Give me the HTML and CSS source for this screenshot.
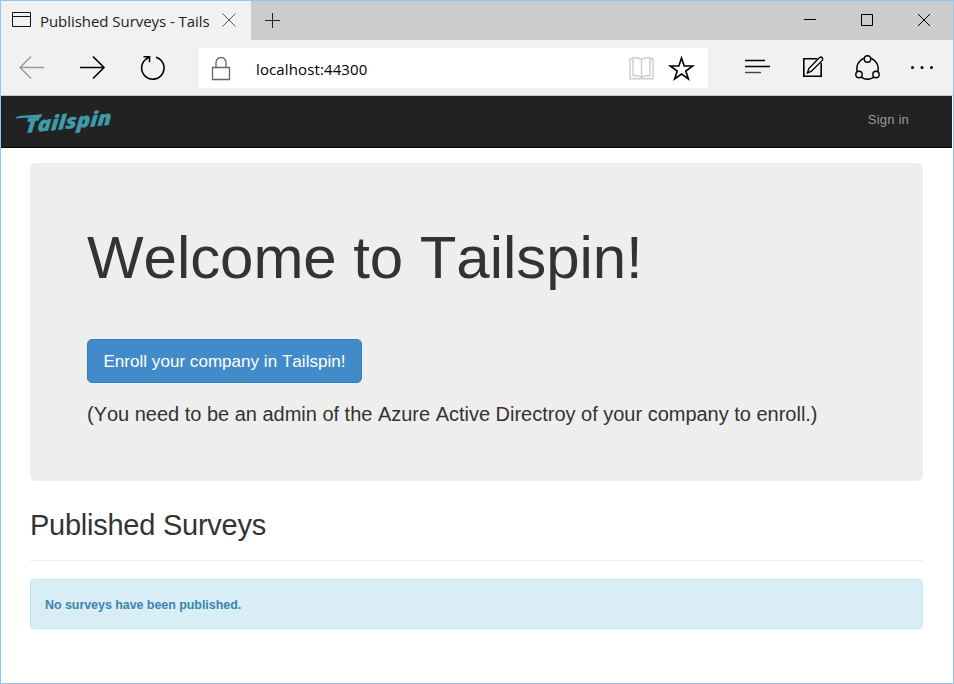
FILE: index.html
```html
<!DOCTYPE html>
<html lang="en">
<head>
<meta charset="utf-8">
<title>Published Surveys - Tailspin</title>
<link rel="stylesheet" href="styles.css">
</head>
<body>
<div class="window">
  <header class="titlebar">
    <div class="tab">
      <svg class="tab-icon" width="19" height="16" fill="none" stroke="#111"><path d="M.5.5h18v14H.5zM.5 4.500h18"/></svg>
      <span class="tab-title">Published Surveys - Tails</span>
      <svg class="tab-close" width="14" height="14" fill="none" stroke="#555"><path d="M.5.5l13 13M13.500.5l-13 13"/></svg>
    </div>
    <svg class="new-tab" width="16" height="16" fill="none" stroke="#222"><path d="M7.500 0v15M0 7.500h15"/></svg>
    <div class="controls">
      <svg width="12" height="12" stroke="#000"><path d="M0 5.500h12"/></svg>
      <svg width="12" height="12" fill="none" stroke="#000"><path d="M.5.5h11v11H.5z"/></svg>
      <svg width="12" height="12" fill="none" stroke="#000"><path d="M0 0l12 12M12 0L0 12"/></svg>
    </div>
  </header>
  <div class="toolbar">
    <svg class="nav-icons" width="197" height="55" fill="none" stroke="#000" stroke-width="1.6">
      <path stroke="#999" stroke-width="1.4" d="M43 27.500H19M30 16.500L19 27.500l11 11"/>
      <path d="M79 27.500h24M92 16.500l11 11-11 11"/>
      <path d="M155 17.200A11.200 11.200 0 1 1 144.500 19.500L148.500 16.800M142.500 16.800h6v5.500"/>
    </svg>
    <div class="address">
      <svg class="lock" width="20" height="24" fill="none" stroke="#666" stroke-width="1.300"><path d="M1.500 10.500h17v12h-17zM5 10.500V5.500a5 5 0 0 1 10 0v5"/></svg>
      <span class="url">localhost:44300</span>
      <svg class="address-icons" width="70" height="30" fill="none">
        <path stroke="#ccc" stroke-width="1.400" d="M5 6.700H2v20h23v-20h-3M13.500 7.500C11 5.500 8 5.500 5 5.500v18c3 0 6 0 8.500 2 2.500-2 5.500-2 8.500-2v-18c-3 0-6 0-8.500 2zV25"/>
        <path stroke="#000" stroke-width="1.600" d="M53.500 6l2.700 8h8.500l-6.900 5 2.600 8-6.900-5-6.900 5 2.600-8-6.900-5h8.500z"/>
      </svg>
    </div>
    <svg class="tools" width="200" height="40" fill="none" stroke="#000" stroke-width="1.400">
      <path d="M4 12.500h20M4 18.500h25"/><path stroke="#444" d="M4 24.500h16"/>
      <path stroke-width="1.600" d="M76 10.800H62.800v17.400h17.400V15"/>
      <path d="M66.500 25l1.300-4.500L78.500 9.600q1.600-1.200 2.700.1t.1 2.700L70.500 23.200z"/>
      <circle cx="126.500" cy="20.500" r="10.700"/>
      <g fill="#f1f1f1"><circle cx="126.500" cy="11" r="3.200"/><circle cx="118" cy="26.500" r="3.200"/><circle cx="135" cy="26.500" r="3.200"/></g>
      <g fill="#000" stroke="none"><circle cx="171.500" cy="19.500" r="1.500"/><circle cx="181" cy="19.500" r="1.500"/><circle cx="190.500" cy="19.500" r="1.500"/></g>
    </svg>
  </div>
  <nav class="navbar">
    <svg class="logo" width="110" height="40">
      <path fill="#3f9ca6" d="M4.500 17C8 13 18 15.500 31 13L30 16.500C22 17 12 16 4.500 17.500z"/>
      <text class="logo-text" transform="translate(14 32) rotate(-5.500) skewX(-9) scale(1.200 1)" textLength="72" lengthAdjust="spacingAndGlyphs">Tailspin</text>
    </svg>
    <a class="signin">Sign in</a>
  </nav>
  <main class="content">
    <section class="jumbotron">
      <h1>Welcome to Tailspin!</h1>
      <a class="button">Enroll your company in Tailspin!</a>
      <p>(You need to be an admin of the Azure Active Directroy of your company to enroll.)</p>
    </section>
    <h2>Published Surveys</h2>
    <div class="alert">No surveys have been published.</div>
  </main>
</div>
</body>
</html>
```
FILE: styles.css
```css
* { box-sizing: border-box; }
body { margin: 0; font-family: "Liberation Sans", Arial, sans-serif; font-kerning: none; color: #333; }
svg { display: block; flex: none; }
.window { width: 954px; height: 684px; border: 1px solid #8ec5f5; background: #fff; overflow: hidden; }
.titlebar { display: flex; height: 39px; background: #ccc; }
.tab { display: flex; flex: none; width: 250px; padding-left: 11px; background: #f1f1f1; font: 15px/20px "Open Sans", sans-serif; letter-spacing: -.05px; color: #222; }
.tab-icon { margin-top: 11px; }
.tab-title { flex: none; width: 191px; padding: 10px 0 0 9px; white-space: nowrap; }
.tab-close { margin-top: 12px; }
.new-tab { margin: 12px 0 0 14px; }
.controls { display: flex; gap: 45px; margin: 13px 23px 0 auto; }
.toolbar { display: flex; height: 56px; background: #f1f1f1; border-bottom: 1px solid #c4c8c4; }
.address { display: flex; width: 509px; height: 40px; margin: 8px 0 0 1px; background: #fff; }
.lock { margin: 9px 0 0 12px; }
.url { width: 170px; margin-left: 25px; font: 15px/42px "Open Sans", sans-serif; letter-spacing: .12px; color: #000; }
.address-icons { margin: 4px 0 0 202px; }
.tools { margin: 8px 0 0 33px; }
.navbar { display: flex; justify-content: space-between; width: 951px; height: 52px; padding: 5px 43px 0 10px; background: #222; border-bottom: 1px solid #080808; }
.logo-text { font: italic 800 20px "Open Sans", sans-serif; font-kerning: normal; fill: #3f9ca6; stroke: #3f9ca6; stroke-width: .3px; }
.signin { margin-top: 10px; font-size: 13px; line-height: 18px; letter-spacing: .2px; color: #999; }
.content { padding: 15px 30px 0 29px; }
.jumbotron { height: 318px; padding: 57px; background: #eee; border-radius: 6px; }
h1 { margin: 8px 0 0; font-size: 60px; font-weight: 400; line-height: 60px; letter-spacing: -.06px; white-space: nowrap; }
.button { display: flex; width: 275px; height: 44px; margin-top: 51px; padding-top: 1px; align-items: center; justify-content: center; background: #428bca; border: 1px solid #357ebd; border-radius: 5px; color: #fff; font-size: 17px; letter-spacing: .04px; white-space: nowrap; }
p { margin: 16px 0 0; font-size: 20px; line-height: 30px; letter-spacing: -.012px; white-space: nowrap; }
h2 { height: 80px; margin: 0; padding-top: 27px; font-size: 29px; font-weight: 400; line-height: 34px; letter-spacing: -.25px; border-bottom: 1px solid #eee; }
.alert { height: 50px; margin-top: 18px; padding: 0 14px; background: #d9edf7; border: 1px solid #bce8f1; border-radius: 4px; color: #3a87ad; font-size: 12.5px; font-weight: bold; line-height: 50px; letter-spacing: -.06px; }
```
